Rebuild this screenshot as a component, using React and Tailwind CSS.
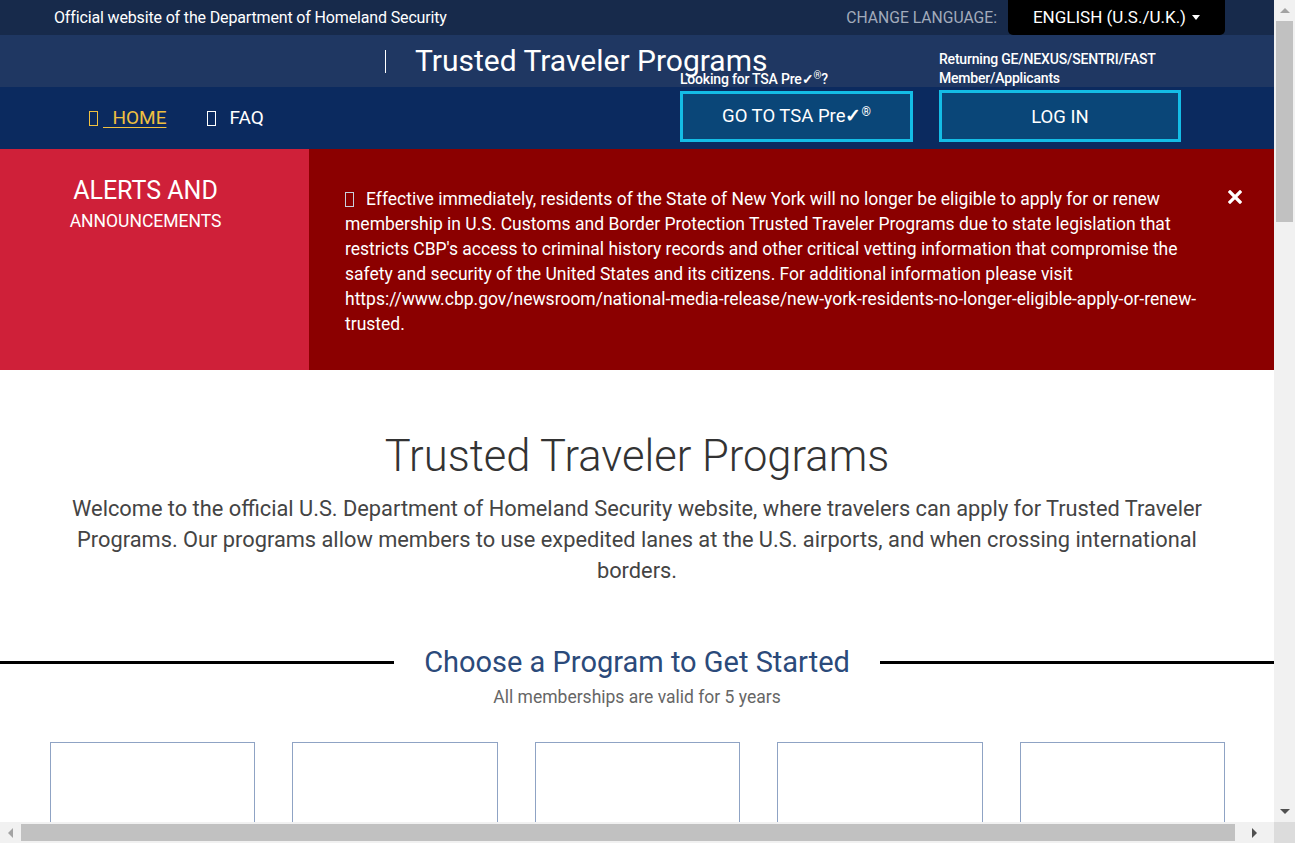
import React from "react";

const font = { fontFamily: "Roboto, 'Noto Sans', sans-serif" };

function Tofu({ color = "border-[#f0c040]" }) {
  return <span className={`inline-block w-[9px] h-[15px] border ${color} align-[-2px]`} />;
}

function Card() {
  return <div className="h-[120px] border border-[#8fa3c4] border-b-0" />;
}

export default function App() {
  return (
    <div style={font} className="w-[1295px] h-[843px] overflow-hidden flex flex-col bg-white">
      <div className="flex flex-1 min-h-0">
        {/* Page */}
        <div className="w-[1274px] h-[822px] overflow-hidden">
          {/* Official bar */}
          <div className="h-[35px] bg-[#172a4b] flex items-center">
            <span className="ml-[54px] text-[16px] text-white tracking-[-0.15px]">
              Official website of the Department of Homeland Security
            </span>
            <div className="ml-auto mr-[49px] flex items-center h-full">
              <span className="text-[15.7px] text-[#a2abbb] mr-[11px]">CHANGE LANGUAGE:</span>
              <div className="h-full w-[217px] bg-black rounded-b-[5px] flex items-center justify-center text-white text-[17px]">
                ENGLISH (U.S./U.K.)
                <span className="ml-[6px] inline-block border-x-[4px] border-x-transparent border-t-[5px] border-t-white" />
              </div>
            </div>
          </div>

          {/* Brand + nav */}
          <div className="relative">
            <div className="h-[52px] bg-[#1f3762] flex items-center">
              <span className="ml-[385px] w-px h-[23px] bg-white" />
              <span className="ml-[29px] text-[30px] text-white leading-none">Trusted Traveler Programs</span>
            </div>
            <div className="h-[62px] bg-[#0b2a5f] flex items-center text-[19px]">
              <a className="ml-[89px] text-[#f0c040] flex items-center gap-[5px]">
                <Tofu />
                <span className="underline underline-offset-[3px] whitespace-pre">  HOME</span>
              </a>
              <a className="ml-[41px] text-white flex items-center gap-[13px]">
                <Tofu color="border-white" />
                <span>FAQ</span>
              </a>
            </div>

            <div className="absolute left-[680px] bottom-[7px] flex items-end gap-[26px] text-white">
              <div className="flex flex-col">
                <span className="text-[14px] font-medium leading-[19px] tracking-[-0.2px]">
                  Looking for TSA Pre<span className="font-bold">✓</span><sup className="text-[10px]">®</sup>?
                </span>
                <button className="mt-[2px] w-[233px] h-[51px] border-[3px] border-[#14bde6] bg-[#0a4678] text-[18.5px]">
                  GO TO TSA Pre<span className="font-bold">✓</span><sup className="text-[12px]">®</sup>
                </button>
              </div>
              <div className="flex flex-col">
                <span className="text-[14px] font-medium leading-[19px] tracking-[-0.2px]">
                  Returning GE/NEXUS/SENTRI/FAST
                  <br />
                  Member/Applicants
                </span>
                <button className="mt-[2px] w-[242px] h-[52px] pt-[3px] border-[3px] border-[#14bde6] bg-[#0a4678] text-[18.5px]">
                  LOG IN
                </button>
              </div>
            </div>
          </div>

          {/* Alerts */}
          <div className="flex h-[221px]">
            <div className="w-[309px] bg-[#cf2039] text-white text-center pt-[27px] pr-[18px]">
              <div className="text-[25px] leading-[30px]">ALERTS AND</div>
              <div className="text-[17.5px] leading-[30px]">ANNOUNCEMENTS</div>
            </div>
            <div className="flex-1 bg-[#8b0000] flex text-white">
              <p className="ml-[36px] mt-[38px] w-[866px] text-[17.5px] leading-[25px]">
                <Tofu color="border-[#c8d0dc]" />
                <span className="ml-[12px]">Effective immediately, residents of the State of New York will no longer be eligible to apply for or renew membership in U.S. Customs and Border Protection Trusted Traveler Programs due to state legislation that restricts CBP's access to criminal history records and other critical vetting information that compromise the safety and security of the United States and its citizens. For additional information please visit https://www.cbp.gov/newsroom/national-media-release/new-york-residents-no-longer-eligible-apply-or-renew-trusted.</span>
              </p>
              <svg className="ml-[17px] mt-[41px]" width="14" height="14" viewBox="0 0 14 14">
                <path d="M2 2 L12 12 M12 2 L2 12" stroke="white" strokeWidth="3.2" strokeLinecap="square" />
              </svg>
            </div>
          </div>

          {/* Intro */}
          <div className="text-center pt-[62px]">
            <h1 className="text-[43.5px] font-light text-[#333] leading-[50px]">Trusted Traveler Programs</h1>
            <p className="mx-auto mt-[11px] w-[1150px] text-[21.8px] leading-[31px] text-[#444]">
              Welcome to the official U.S. Department of Homeland Security website, where travelers can apply for Trusted Traveler Programs. Our programs allow members to use expedited lanes at the U.S. airports, and when crossing international borders.
            </p>
          </div>

          {/* Choose program */}
          <div className="mt-[59px] flex items-center">
            <div className="w-[394px] h-[3px] bg-black" />
            <h2 className="flex-1 text-center text-[29px] text-[#2b4a7a] leading-[34px]">Choose a Program to Get Started</h2>
            <div className="w-[394px] h-[3px] bg-black" />
          </div>
          <div className="text-center text-[17.5px] text-[#666] mt-[5px]">All memberships are valid for 5 years</div>

          <div className="mt-[32px] mx-[50px] w-[1175px] grid grid-cols-5 gap-x-[37px]">
            <Card />
            <Card />
            <Card />
            <Card />
            <Card />
          </div>
        </div>

        {/* Vertical scrollbar */}
        <div className="w-[21px] bg-[#f1f1f1] flex flex-col items-center">
          <div className="h-[21px] flex items-center justify-center">
            <span className="border-x-[5px] border-x-transparent border-b-[5px] border-b-[#a3a3a3]" />
          </div>
          <div className="w-[17px] h-[201px] bg-[#c1c1c1]" />
          <div className="flex-1" />
          <div className="h-[21px] flex items-center justify-center">
            <span className="border-x-[5px] border-x-transparent border-t-[5px] border-t-[#505050]" />
          </div>
        </div>
      </div>

      {/* Horizontal scrollbar */}
      <div className="h-[21px] flex bg-[#f1f1f1]">
        <div className="w-[21px] flex items-center justify-center">
          <span className="border-y-[5px] border-y-transparent border-r-[5px] border-r-[#a3a3a3]" />
        </div>
        <div className="w-[1214px] my-[2px] bg-[#c1c1c1]" />
        <div className="flex-1 flex items-center justify-center">
          <span className="border-y-[5px] border-y-transparent border-l-[5px] border-l-[#505050]" />
        </div>
        <div className="w-[21px] bg-[#dcdcdc]" />
      </div>
    </div>
  );
}
